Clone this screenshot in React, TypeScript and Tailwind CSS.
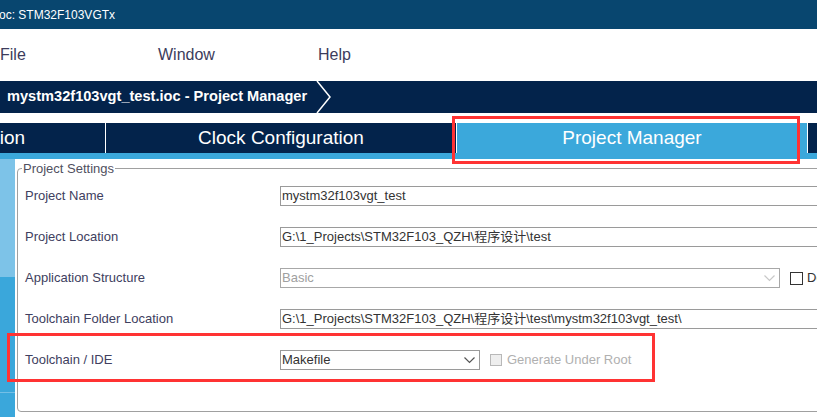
import React from "react"

const FONT = "font-['Liberation_Sans','Noto_Sans_CJK_SC',Arial,sans-serif]"

function Chevron({ color }: { color: string }) {
    return (
        <svg width="11" height="7" viewBox="0 0 11 7" className="mr-[4px] shrink-0">
            <path d="M0.5 0.5 L5.5 5.5 L10.5 0.5" fill="none" stroke={color} strokeWidth="1.2" />
        </svg>
    )
}

function Row({ label, children }: { label: string; children: React.ReactNode }) {
    return (
        <div className="flex items-center h-[20px]">
            <div className="w-[255px] shrink-0 text-[13px] text-[#404060]">{label}</div>
            {children}
        </div>
    )
}

function TextBox({ value }: { value: string }) {
    return (
        <div className="w-[600px] h-[20px] shrink-0 border border-[#9a9a9a] pl-[1px] flex items-center text-[13px] text-[#333] whitespace-nowrap">
            {value}
        </div>
    )
}

export default function App() {
    const tabs = ["Pinout & Configuration", "Clock Configuration", "Project Manager", "Tools"]

    return (
        <div className={`relative w-[817px] h-[417px] overflow-hidden bg-white ${FONT}`}>
            {/* title bar */}
            <div className="h-[29px] bg-[#08466f] flex items-center text-white text-[12px] whitespace-nowrap">
                <span className="ml-[-1px]">oc: STM32F103VGTx</span>
            </div>

            {/* menu */}
            <div className="h-[52px] flex items-center text-[16px] text-[#3c3c5c]">
                <span className="w-[158px]">File</span>
                <span className="w-[160px]">Window</span>
                <span>Help</span>
            </div>

            {/* breadcrumb */}
            <div className="h-[32px] bg-[#03234b] flex items-center">
                <span className="pl-[7px] text-white font-bold text-[14.6px] whitespace-nowrap">
                    mystm32f103vgt_test.ioc - Project Manager
                </span>
                <svg width="16" height="32" viewBox="0 0 16 32" className="ml-[9px] shrink-0">
                    <path d="M1 0 L14 16 L1 32" fill="none" stroke="#ffffff" strokeWidth="1.5" />
                </svg>
            </div>

            <div className="h-[10px]" />

            {/* tabs */}
            <div className="h-[30px] flex gap-px ml-[-245px]">
                {tabs.map((t) => (
                    <div
                        key={t}
                        className={`w-[350px] shrink-0 flex items-center justify-center text-white text-[19px] whitespace-nowrap ${
                            t === "Project Manager" ? "bg-[#3ba8db]" : "bg-[#03234b]"
                        }`}
                    >
                        {t}
                    </div>
                ))}
            </div>
            <div className="h-[6px] bg-[#3ba8db]" />

            {/* body */}
            <div className="flex h-[258px]">
                <div className="w-[15px] shrink-0 flex flex-col">
                    <div className="h-[118px] bg-[#7dc3e8]" />
                    <div className="flex-1 bg-[#3aa7db] flex flex-col">
                        <div className="h-[115px]" />
                        <div className="h-px bg-[#74bfe6]" />
                    </div>
                </div>

                <div className="flex-1 pt-[2px]">
                    <fieldset className="ml-[2px] w-[840px] h-[251px] border border-[#a0a0a0] rounded-[4px] pl-[7px]">
                        <legend className="ml-[-3px] px-[1px] text-[13px] leading-[15px] text-[#505060]">Project Settings</legend>
                        <div className="mt-[10px] flex flex-col gap-[21px]">
                            <Row label="Project Name">
                                <TextBox value="mystm32f103vgt_test" />
                            </Row>
                            <Row label="Project Location">
                                <TextBox value="G:\1_Projects\STM32F103_QZH\程序设计\test" />
                            </Row>
                            <Row label="Application Structure">
                                <div className="w-[500px] h-[20px] shrink-0 border border-[#a8a8a8] pl-[1px] flex items-center justify-between text-[13px] text-[#a0a0a0]">
                                    <span>Basic</span>
                                    <Chevron color="#c8c8c8" />
                                </div>
                                <div className="ml-[10px] w-[13px] h-[13px] shrink-0 border border-[#333]" />
                                <span className="ml-[4px] text-[13px] text-[#333] whitespace-nowrap">Do not Generate the main()</span>
                            </Row>
                            <Row label="Toolchain Folder Location">
                                <TextBox value="G:\1_Projects\STM32F103_QZH\程序设计\test\mystm32f103vgt_test\" />
                            </Row>
                            <Row label="Toolchain / IDE">
                                <div className="w-[200px] h-[20px] shrink-0 border border-[#9a9a9a] pl-[1px] flex items-center justify-between text-[13px] text-[#333]">
                                    <span>Makefile</span>
                                    <Chevron color="#555555" />
                                </div>
                                <div className="ml-[10px] w-[12px] h-[12px] shrink-0 border border-[#b8b8b8] bg-[#eeeeee]" />
                                <span className="ml-[5px] text-[13px] text-[#b0b0b0] whitespace-nowrap">Generate Under Root</span>
                            </Row>
                        </div>
                    </fieldset>
                </div>
            </div>

            {/* red annotation boxes */}
            <div className="absolute left-[452px] top-[116px] w-[348px] h-[48px] border-[3px] border-[#ff3333]" />
            <div className="absolute left-[7px] top-[333px] w-[648px] h-[49px] border-[3px] border-[#ff3333]" />
        </div>
    )
}
